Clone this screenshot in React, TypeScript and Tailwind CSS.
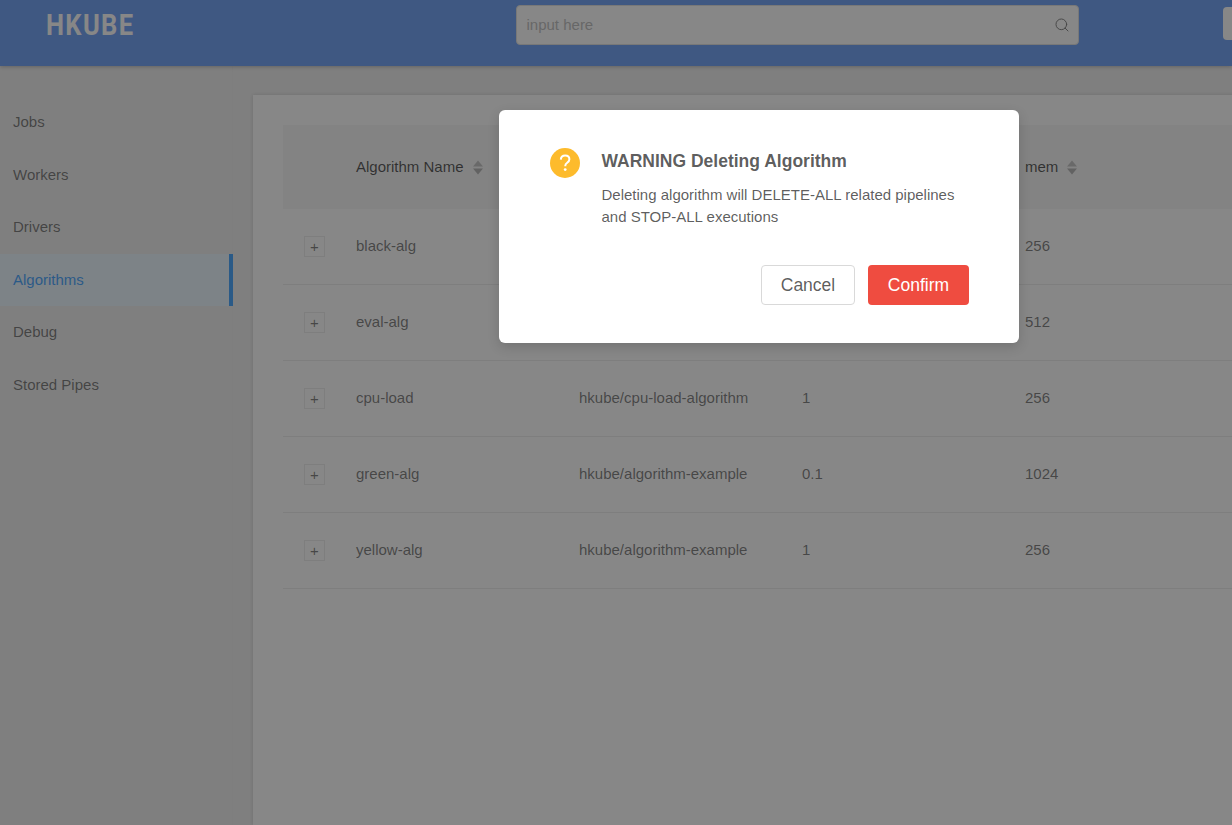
import { Search } from "lucide-react";

const rows = [
  ["black-alg", "", "", "256"],
  ["eval-alg", "", "", "512"],
  ["cpu-load", "hkube/cpu-load-algorithm", "1", "256"],
  ["green-alg", "hkube/algorithm-example", "0.1", "1024"],
  ["yellow-alg", "hkube/algorithm-example", "1", "256"],
];
const nav = ["Jobs", "Workers", "Drivers", "Algorithms", "Debug", "Stored Pipes"];

function Sorter() {
  return (
    <svg width="10" height="15" viewBox="0 0 10 15" className="ml-[9px] shrink-0">
      <path d="M5 0.5 L10 6.5 H0 Z" fill="#b4b4b4" />
      <path d="M5 14.5 L10 8.5 H0 Z" fill="#a2a2a2" />
    </svg>
  );
}

function Head({ label }: { label: string }) {
  return (
    <div className="w-[223px] shrink-0 flex items-center text-[15px] text-[rgba(0,0,0,0.85)]">
      {label}
      {label && <Sorter />}
    </div>
  );
}

export default function App() {
  return (
    <div className="relative h-[825px] w-[1232px] overflow-hidden bg-[#ececec] font-['Liberation_Sans',Arial,sans-serif] text-[15px] text-[rgba(0,0,0,0.65)]">
      <header className="h-[66px] bg-[#4b89f2] flex items-start shadow-[0_1px_4px_rgba(0,0,0,0.3)] relative">
        <div className="ml-[46px] mt-[7px] w-[87px] shrink-0 h-[36px] leading-[36px] font-['Roboto',sans-serif] font-bold text-[29px] text-white tracking-[1.5px] whitespace-nowrap origin-left scale-x-[0.88]">
          HKUBE
        </div>
        <div className="ml-[383px] mt-[5px] w-[563px] shrink-0 h-[40px] bg-white rounded border border-[#d9d9d9] flex items-center justify-between pl-[9.5px] pr-[8px]">
          <span className="text-[#b0b0b0] text-[15px]">input here</span>
          <Search size={16} strokeWidth={1.4} className="text-[#595959]" />
        </div>
        <div className="ml-[144px] mt-[7px] w-[40px] h-[33px] bg-white rounded-[4px] shrink-0" />
      </header>
      <div className="flex h-[759px]">
        <aside className="w-[233px] shrink-0 pt-[30px] border-r border-[#e8e8e8]">
          {nav.map((n) => (
            <div
              key={n}
              className={
                n === "Algorithms"
                  ? "h-[52.5px] flex items-center pl-[13px] bg-[#e6f4ff] text-[#1890ff] border-r-[4px] border-[#1890ff] -mr-px"
                  : "h-[52.5px] flex items-center pl-[13px]"
              }
            >
              {n}
            </div>
          ))}
        </aside>
        <main className="ml-[20px] mt-[29px] flex-1 bg-white pt-[30px] pl-[30px] shadow-[0_0_4px_rgba(0,0,0,0.2)]">
          <div className="w-[979px]">
            <div className="h-[84px] bg-[#f5f5f5] flex items-center">
              <div className="w-[73px] shrink-0" />
              <Head label="Algorithm Name" />
              <Head label="" />
              <Head label="" />
              <Head label="mem" />
            </div>
            {rows.map((r) => (
              <div key={r[0]} className="h-[76px] border-b border-[#e8e8e8] flex items-center">
                <div className="w-[73px] shrink-0 pl-[21px]">
                  <div className="w-[21px] h-[21px] border border-[#e8e8e8] flex items-center justify-center text-[15px] leading-none">
                    +
                  </div>
                </div>
                {r.map((c, i) => (
                  <div key={i} className="w-[223px] shrink-0">
                    {c}
                  </div>
                ))}
              </div>
            ))}
          </div>
        </main>
      </div>

      <div className="absolute inset-0 bg-[rgba(55,55,55,0.6)]" />
      <div className="absolute left-[499px] top-[110px] w-[520px] h-[233px] bg-white rounded-[6px] shadow-[0_4px_12px_rgba(0,0,0,0.15)] pt-[38px] pl-[51px] pr-[50px]">
        <div className="flex">
          <svg width="30" height="30" viewBox="0 0 30 30" className="shrink-0">
            <circle cx="15" cy="15" r="15" fill="#fdbb2c" />
            <path d="M10.8 11.6c.2-2.5 2-4 4.4-4 2.4 0 4.2 1.5 4.2 3.7 0 1.7-1 2.6-2.2 3.5-1.2.9-1.9 1.5-1.9 3v.5" fill="none" stroke="#fff" strokeWidth="2" />
            <circle cx="15.2" cy="21.6" r="1.4" fill="#fff" />
          </svg>
          <div className="ml-[21.5px]">
            <div className="text-[17.5px] leading-[26px] font-bold text-[rgba(0,0,0,0.65)]">WARNING Deleting Algorithm</div>
            <div className="mt-[10px] text-[15px] leading-[22px] text-[rgba(0,0,0,0.65)]">
              Deleting algorithm will DELETE-ALL related pipelines
              <br />
              and STOP-ALL executions
            </div>
          </div>
        </div>
        <div className="flex justify-end gap-[13px] mt-[37px]">
          <button className="w-[94px] h-[40px] rounded border border-[#d9d9d9] bg-white text-[17.5px] text-[rgba(0,0,0,0.65)]">Cancel</button>
          <button className="w-[101px] h-[40px] rounded bg-[#ef4c40] text-white text-[17.5px]">Confirm</button>
        </div>
      </div>
    </div>
  );
}
